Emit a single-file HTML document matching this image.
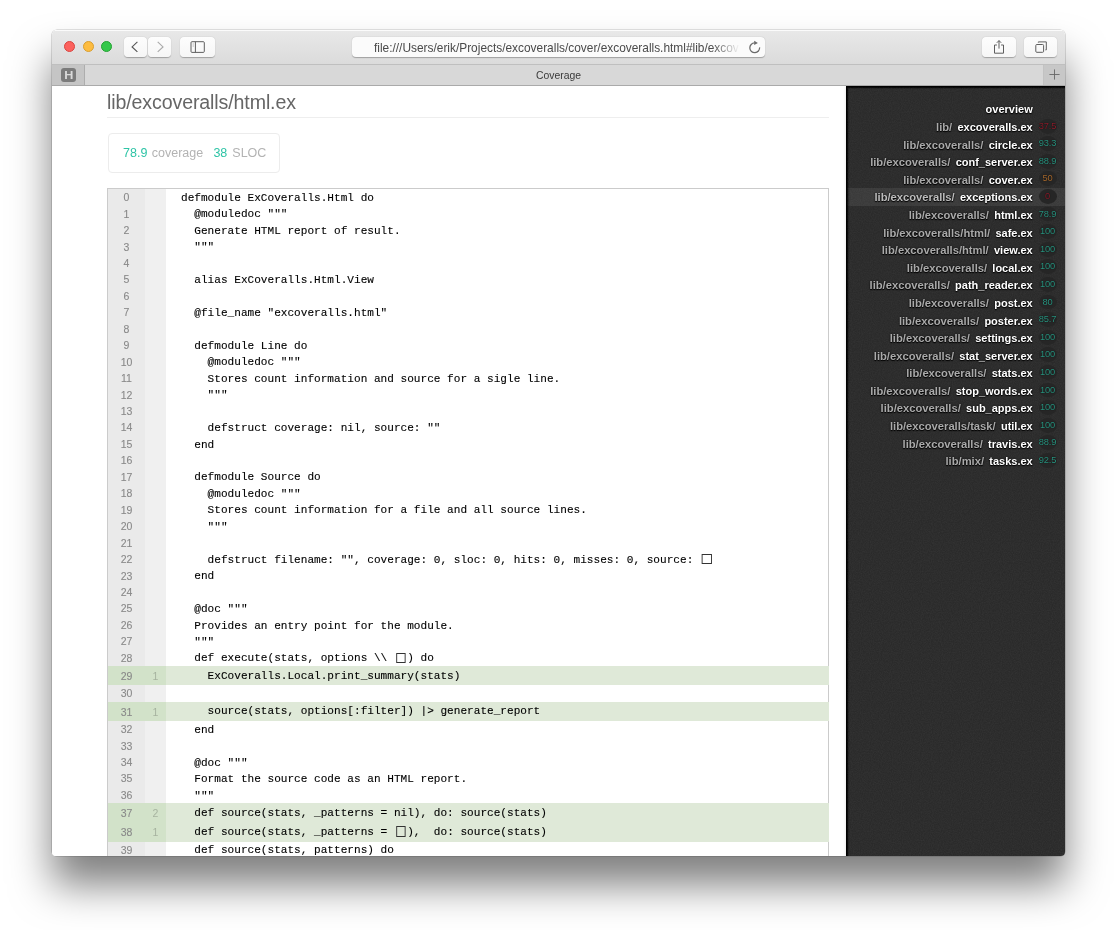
<!DOCTYPE html>
<html><head><meta charset="utf-8">
<style>
*{box-sizing:border-box;margin:0;padding:0}
html,body{width:1117px;height:930px;overflow:hidden;background:#fff}
body{position:relative;font-family:"Liberation Sans",sans-serif}
#shadow{position:absolute;left:52px;top:30px;width:1013px;height:826px;border-radius:5px;box-shadow:0 0 0 0.6px rgba(0,0,0,0.22),0 29px 40px rgba(0,0,0,0.5)}
#win{position:absolute;left:52px;top:30px;width:1013px;height:826px;border-radius:5px 5px 4px 4px;overflow:hidden;background:#fff;will-change:transform}
#toolbar{position:absolute;left:0;top:0;width:1013px;height:34px;background:linear-gradient(#e8e8e8,#dbdbdb);border-top:1px solid #fbfbfb}
#tbline{position:absolute;left:0;top:34px;width:1013px;height:1px;background:#bfbfbf}
#tabbar{position:absolute;left:0;top:35px;width:1013px;height:20px;background:#d8d8d8}
#tabline{position:absolute;left:0;top:55px;width:1013px;height:1px;background:#aaaaaa;z-index:5}
#content{position:absolute;left:0;top:55px;width:1013px;height:771px;background:#fff;overflow:hidden}
.tl{position:absolute;top:10.6px;width:11px;height:11px;border-radius:50%}
.btn{position:absolute;top:7px;height:20px;background:linear-gradient(#fdfdfd,#f6f6f6);border-radius:4px;box-shadow:0 0.5px 1px rgba(0,0,0,0.28)}
#url{position:absolute;left:300px;top:7px;width:413px;height:20px;background:#fbfbfb;border-radius:4px;box-shadow:0 0.5px 1px rgba(0,0,0,0.28);overflow:hidden}
#url .t{position:absolute;left:22px;top:3.6px;font-size:11.9px;color:#4a4a4a;white-space:nowrap;line-height:14px}
#url .fade{position:absolute;left:360px;top:0;width:40px;height:20px;background:linear-gradient(90deg,rgba(251,251,251,0),#fbfbfb 70%)}
#pinned{position:absolute;left:0;top:35px;width:33px;height:20px;background:#c5c5c5;border-right:1px solid #adadad}
#fav{position:absolute;left:9.2px;top:2.8px;width:14.6px;height:14.2px;border-radius:3px;background:#7b7b7b;color:#dadada;font-weight:700;font-size:10.5px;line-height:14.2px;text-align:center}
#fav span{display:inline-block;transform:scaleX(1.2)}
#newtab{position:absolute;left:991px;top:35px;width:22px;height:21px;background:#c7c7c7;border-left:1px solid #c2c2c2}
#tabtitle{position:absolute;left:0;top:36px;width:1013px;height:20px;text-align:center;font-size:10.4px;line-height:20px;color:#3a3a3a}

#title{position:absolute;left:55px;top:5.3px;font-size:19.6px;letter-spacing:-0.12px;line-height:24px;color:#666;white-space:nowrap}
#hr{position:absolute;left:55px;top:32px;width:722px;height:1px;background:#eeeeee}
#stats{position:absolute;left:56px;top:48px;width:172px;height:40px;border:1px solid #ececec;border-radius:4px}
#stats .t{position:absolute;left:14px;top:12.2px;font-size:12.5px;line-height:14px;white-space:pre;color:#b3b3b3}
#stats .high{color:#2ec4a6}
#table{position:absolute;left:55px;top:102.8px;width:722px;height:800px;border:1px solid #cbcbcb;background:linear-gradient(90deg,#eaeaea 0,#eaeaea 37px,#f0f0f0 37px,#f0f0f0 58px,#fff 58px)}
.row{position:absolute;left:56px;width:721px}
.row .ln{position:absolute;left:0;top:0;width:37px;height:100%;text-align:center;font-size:10.5px;color:#888;-webkit-text-stroke:0.1px #888}
.row .hc{position:absolute;left:37px;top:0;width:21px;height:100%;text-align:center;font-size:10.5px;color:rgba(0,0,0,0.22)}
.row .src{position:absolute;left:58px;top:0;right:0;height:100%}
.row .c{position:absolute;left:15px;top:1.05px;white-space:pre;font-family:"Liberation Mono",monospace;font-size:11.8px;color:#000;-webkit-text-stroke:0.12px #000;transform:scaleX(0.9398);transform-origin:0 0}
.row.hit .c{top:0.95px}
.row.hit .ln,.row.hit .hc{background:#d2e2c9;height:calc(100% + 0.4px)}
.row.hit .src{background:#dfe9d8;height:calc(100% + 0.4px)}
.bx{display:inline-block;width:14.16px;height:10px;position:relative;vertical-align:baseline}
.bx:after{content:"";position:absolute;left:2px;top:1.1px;width:10.5px;height:10.6px;border:1.1px solid #333;box-sizing:border-box}
.ln span,.hc span{position:relative;top:0.4px}
.hit .ln span,.hit .hc span{top:1.1px}

#menu{position:absolute;left:794px;top:1px;width:219px;height:771px;background:#2a2a2a;border-left:1px solid #000;border-top:1px solid #000;box-shadow:inset 1px 1px 1.5px #000,-1px 0 2px rgba(0,0,0,0.07)}
.mi{position:absolute;left:0;width:219px;height:17.59px;line-height:19.39px;text-align:right;padding-right:33.3px;font-size:11px;font-weight:700;color:#fff;white-space:nowrap;text-shadow:0 1px 1px #000,0 0 2px rgba(0,0,0,0.8)}
.mi .dn{color:#aaaaaa;padding-right:2.2px;font-size:11.2px}
.mi.sel{background:linear-gradient(90deg,rgba(255,255,255,0) 0,rgba(255,255,255,0.075) 3px)}
.mi.sel .dn{color:#bdbdbd}
.mi .cov{position:absolute;left:191.5px;top:0.7px;width:18px;height:14.8px;border-radius:50%;background:#262626;text-align:center;font-size:9.3px;letter-spacing:-0.15px;line-height:15.2px;font-weight:400;text-shadow:0 0 1px #000}
.mi .cov.high{color:#2b9480}
.mi .cov.medium{color:#a5692f}
.mi .cov.low{color:#8a1f2d}
</style></head>
<body>
<div id="shadow"></div>
<div id="win">
  <div id="toolbar"></div>
  <div class="tl" style="left:12px;background:#fc615d;border:1px solid #d9443f"></div>
  <div class="tl" style="left:30.5px;background:#fdbc40;border:1px solid #d99e2f"></div>
  <div class="tl" style="left:48.9px;background:#34c84a;border:1px solid #24a232"></div>
  <div class="btn" style="left:72px;width:23px">
    <svg width="23" height="20" style="position:absolute;left:0;top:0"><path d="M13.4 4.9 L8.1 9.9 L13.4 14.9" fill="none" stroke="#555" stroke-width="1.15"/></svg>
  </div>
  <div class="btn" style="left:96px;width:23px">
    <svg width="23" height="20" style="position:absolute;left:0;top:0"><path d="M9.7 4.9 L15 9.9 L9.7 14.9" fill="none" stroke="#aaa" stroke-width="1.15"/></svg>
  </div>
  <div class="btn" style="left:128px;width:35px">
    <svg width="35" height="20" style="position:absolute;left:0;top:0"><rect x="11" y="4.7" width="13.3" height="10.7" rx="1" fill="none" stroke="#5e5e5e" stroke-width="1"/><line x1="15.4" y1="4.7" x2="15.4" y2="15.4" stroke="#5e5e5e" stroke-width="1"/><line x1="13.2" y1="6.5" x2="13.2" y2="10" stroke="#8a8a8a" stroke-width="0.8" stroke-dasharray="1 1"/></svg>
  </div>
  <div id="url"><div class="t">file:///Users/erik/Projects/excoveralls/cover/excoveralls.html#lib/excov</div><div class="fade"></div>
    <svg width="20" height="20" style="position:absolute;left:393px;top:0"><path d="M9.6 5.9 A4.9 4.9 0 1 0 14.6 10.4" fill="none" stroke="#6a6a6a" stroke-width="1.25"/><path d="M9.2 3.8 L9.2 8.1 L12.9 6.1 Z" fill="#6a6a6a"/></svg>
  </div>
  <div class="btn" style="left:930px;width:34px">
    <svg width="34" height="20" style="position:absolute;left:0;top:0"><path d="M14.9 8 H12.5 V16.2 H21.5 V8 H19.1" fill="none" stroke="#5e5e5e" stroke-width="1"/><line x1="17" y1="3.6" x2="17" y2="11.6" stroke="#5e5e5e" stroke-width="1"/><path d="M14.8 5.8 L17 3.6 L19.2 5.8" fill="none" stroke="#5e5e5e" stroke-width="1"/></svg>
  </div>
  <div class="btn" style="left:972px;width:33px">
    <svg width="33" height="20" style="position:absolute;left:0;top:0"><rect x="11.8" y="7.5" width="7.8" height="7.8" rx="1" fill="none" stroke="#5e5e5e" stroke-width="1"/><path d="M14.3 5.6 V4.9 H22.3 V12.9 H21.4" fill="none" stroke="#5e5e5e" stroke-width="1"/></svg>
  </div>
  <div id="tbline"></div>
  <div id="tabbar"></div>
  <div id="pinned"><div id="fav"><span>H</span></div></div>
  <div id="tabtitle">Coverage</div>
  <div id="newtab"><svg width="22" height="20" style="position:absolute;left:0;top:0"><line x1="5.4" y1="9.5" x2="15.6" y2="9.5" stroke="#666" stroke-width="0.9"/><line x1="10.5" y1="4.4" x2="10.5" y2="14.6" stroke="#666" stroke-width="0.9"/></svg></div>
  <div id="tabline"></div>
  <div id="content">
    <div id="title">lib/excoveralls/html.ex</div>
    <div id="hr"></div>
    <div id="stats"><span class="t high" style="left:14px">78.9</span><span class="t" style="left:42.8px">coverage</span><span class="t high" style="left:104.4px">38</span><span class="t" style="left:123.3px">SLOC</span></div>
    <div id="table"></div>
<div class="row" style="top:103.80px;height:16.45px;line-height:16.45px"><div class="ln"><span>0</span></div><div class="hc"><span></span></div><div class="src"><div class="c">defmodule ExCoveralls.Html do</div></div></div>
<div class="row" style="top:120.25px;height:16.45px;line-height:16.45px"><div class="ln"><span>1</span></div><div class="hc"><span></span></div><div class="src"><div class="c">  @moduledoc &quot;&quot;&quot;</div></div></div>
<div class="row" style="top:136.70px;height:16.45px;line-height:16.45px"><div class="ln"><span>2</span></div><div class="hc"><span></span></div><div class="src"><div class="c">  Generate HTML report of result.</div></div></div>
<div class="row" style="top:153.15px;height:16.45px;line-height:16.45px"><div class="ln"><span>3</span></div><div class="hc"><span></span></div><div class="src"><div class="c">  &quot;&quot;&quot;</div></div></div>
<div class="row" style="top:169.60px;height:16.45px;line-height:16.45px"><div class="ln"><span>4</span></div><div class="hc"><span></span></div><div class="src"><div class="c"></div></div></div>
<div class="row" style="top:186.05px;height:16.45px;line-height:16.45px"><div class="ln"><span>5</span></div><div class="hc"><span></span></div><div class="src"><div class="c">  alias ExCoveralls.Html.View</div></div></div>
<div class="row" style="top:202.50px;height:16.45px;line-height:16.45px"><div class="ln"><span>6</span></div><div class="hc"><span></span></div><div class="src"><div class="c"></div></div></div>
<div class="row" style="top:218.95px;height:16.45px;line-height:16.45px"><div class="ln"><span>7</span></div><div class="hc"><span></span></div><div class="src"><div class="c">  @file_name &quot;excoveralls.html&quot;</div></div></div>
<div class="row" style="top:235.40px;height:16.45px;line-height:16.45px"><div class="ln"><span>8</span></div><div class="hc"><span></span></div><div class="src"><div class="c"></div></div></div>
<div class="row" style="top:251.85px;height:16.45px;line-height:16.45px"><div class="ln"><span>9</span></div><div class="hc"><span></span></div><div class="src"><div class="c">  defmodule Line do</div></div></div>
<div class="row" style="top:268.30px;height:16.45px;line-height:16.45px"><div class="ln"><span>10</span></div><div class="hc"><span></span></div><div class="src"><div class="c">    @moduledoc &quot;&quot;&quot;</div></div></div>
<div class="row" style="top:284.75px;height:16.45px;line-height:16.45px"><div class="ln"><span>11</span></div><div class="hc"><span></span></div><div class="src"><div class="c">    Stores count information and source for a sigle line.</div></div></div>
<div class="row" style="top:301.20px;height:16.45px;line-height:16.45px"><div class="ln"><span>12</span></div><div class="hc"><span></span></div><div class="src"><div class="c">    &quot;&quot;&quot;</div></div></div>
<div class="row" style="top:317.65px;height:16.45px;line-height:16.45px"><div class="ln"><span>13</span></div><div class="hc"><span></span></div><div class="src"><div class="c"></div></div></div>
<div class="row" style="top:334.10px;height:16.45px;line-height:16.45px"><div class="ln"><span>14</span></div><div class="hc"><span></span></div><div class="src"><div class="c">    defstruct coverage: nil, source: &quot;&quot;</div></div></div>
<div class="row" style="top:350.55px;height:16.45px;line-height:16.45px"><div class="ln"><span>15</span></div><div class="hc"><span></span></div><div class="src"><div class="c">  end</div></div></div>
<div class="row" style="top:367.00px;height:16.45px;line-height:16.45px"><div class="ln"><span>16</span></div><div class="hc"><span></span></div><div class="src"><div class="c"></div></div></div>
<div class="row" style="top:383.45px;height:16.45px;line-height:16.45px"><div class="ln"><span>17</span></div><div class="hc"><span></span></div><div class="src"><div class="c">  defmodule Source do</div></div></div>
<div class="row" style="top:399.90px;height:16.45px;line-height:16.45px"><div class="ln"><span>18</span></div><div class="hc"><span></span></div><div class="src"><div class="c">    @moduledoc &quot;&quot;&quot;</div></div></div>
<div class="row" style="top:416.35px;height:16.45px;line-height:16.45px"><div class="ln"><span>19</span></div><div class="hc"><span></span></div><div class="src"><div class="c">    Stores count information for a file and all source lines.</div></div></div>
<div class="row" style="top:432.80px;height:16.45px;line-height:16.45px"><div class="ln"><span>20</span></div><div class="hc"><span></span></div><div class="src"><div class="c">    &quot;&quot;&quot;</div></div></div>
<div class="row" style="top:449.25px;height:16.45px;line-height:16.45px"><div class="ln"><span>21</span></div><div class="hc"><span></span></div><div class="src"><div class="c"></div></div></div>
<div class="row" style="top:465.70px;height:16.45px;line-height:16.45px"><div class="ln"><span>22</span></div><div class="hc"><span></span></div><div class="src"><div class="c">    defstruct filename: &quot;&quot;, coverage: 0, sloc: 0, hits: 0, misses: 0, source: <span class="bx"></span></div></div></div>
<div class="row" style="top:482.15px;height:16.45px;line-height:16.45px"><div class="ln"><span>23</span></div><div class="hc"><span></span></div><div class="src"><div class="c">  end</div></div></div>
<div class="row" style="top:498.60px;height:16.45px;line-height:16.45px"><div class="ln"><span>24</span></div><div class="hc"><span></span></div><div class="src"><div class="c"></div></div></div>
<div class="row" style="top:515.05px;height:16.45px;line-height:16.45px"><div class="ln"><span>25</span></div><div class="hc"><span></span></div><div class="src"><div class="c">  @doc &quot;&quot;&quot;</div></div></div>
<div class="row" style="top:531.50px;height:16.45px;line-height:16.45px"><div class="ln"><span>26</span></div><div class="hc"><span></span></div><div class="src"><div class="c">  Provides an entry point for the module.</div></div></div>
<div class="row" style="top:547.95px;height:16.45px;line-height:16.45px"><div class="ln"><span>27</span></div><div class="hc"><span></span></div><div class="src"><div class="c">  &quot;&quot;&quot;</div></div></div>
<div class="row" style="top:564.40px;height:16.45px;line-height:16.45px"><div class="ln"><span>28</span></div><div class="hc"><span></span></div><div class="src"><div class="c">  def execute(stats, options \\ <span class="bx"></span>) do</div></div></div>
<div class="row hit" style="top:580.85px;height:19.2px;line-height:19.2px"><div class="ln"><span>29</span></div><div class="hc"><span>1</span></div><div class="src"><div class="c">    ExCoveralls.Local.print_summary(stats)</div></div></div>
<div class="row" style="top:600.05px;height:16.45px;line-height:16.45px"><div class="ln"><span>30</span></div><div class="hc"><span></span></div><div class="src"><div class="c"></div></div></div>
<div class="row hit" style="top:616.50px;height:19.2px;line-height:19.2px"><div class="ln"><span>31</span></div><div class="hc"><span>1</span></div><div class="src"><div class="c">    source(stats, options[:filter]) |&gt; generate_report</div></div></div>
<div class="row" style="top:635.70px;height:16.45px;line-height:16.45px"><div class="ln"><span>32</span></div><div class="hc"><span></span></div><div class="src"><div class="c">  end</div></div></div>
<div class="row" style="top:652.15px;height:16.45px;line-height:16.45px"><div class="ln"><span>33</span></div><div class="hc"><span></span></div><div class="src"><div class="c"></div></div></div>
<div class="row" style="top:668.60px;height:16.45px;line-height:16.45px"><div class="ln"><span>34</span></div><div class="hc"><span></span></div><div class="src"><div class="c">  @doc &quot;&quot;&quot;</div></div></div>
<div class="row" style="top:685.05px;height:16.45px;line-height:16.45px"><div class="ln"><span>35</span></div><div class="hc"><span></span></div><div class="src"><div class="c">  Format the source code as an HTML report.</div></div></div>
<div class="row" style="top:701.50px;height:16.45px;line-height:16.45px"><div class="ln"><span>36</span></div><div class="hc"><span></span></div><div class="src"><div class="c">  &quot;&quot;&quot;</div></div></div>
<div class="row hit" style="top:717.95px;height:19.2px;line-height:19.2px"><div class="ln"><span>37</span></div><div class="hc"><span>2</span></div><div class="src"><div class="c">  def source(stats, _patterns = nil), do: source(stats)</div></div></div>
<div class="row hit" style="top:737.15px;height:19.2px;line-height:19.2px"><div class="ln"><span>38</span></div><div class="hc"><span>1</span></div><div class="src"><div class="c">  def source(stats, _patterns = <span class="bx"></span>),  do: source(stats)</div></div></div>
<div class="row" style="top:756.35px;height:16.45px;line-height:16.45px"><div class="ln"><span>39</span></div><div class="hc"><span></span></div><div class="src"><div class="c">  def source(stats, patterns) do</div></div></div>
    <div id="menu">
<svg width="219" height="771" style="position:absolute;left:0;top:0"><filter id="nz" x="0" y="0" width="100%" height="100%"><feTurbulence type="fractalNoise" baseFrequency="0.9" numOctaves="2" seed="3"/><feColorMatrix type="matrix" values="0 0 0 0 0.5  0 0 0 0 0.5  0 0 0 0 0.5  0.6 0 0 0 -0.15"/></filter><rect width="219" height="771" filter="url(#nz)" opacity="0.17"/></svg>
<div class="mi" style="top:13.45px"> <span class="bn">overview</span></div>
<div class="mi" style="top:31.04px"><span class="dn">lib/</span> <span class="bn">excoveralls.ex</span><span class="cov low">37.5</span></div>
<div class="mi" style="top:48.63px"><span class="dn">lib/excoveralls/</span> <span class="bn">circle.ex</span><span class="cov high">93.3</span></div>
<div class="mi" style="top:66.22px"><span class="dn">lib/excoveralls/</span> <span class="bn">conf_server.ex</span><span class="cov high">88.9</span></div>
<div class="mi" style="top:83.81px"><span class="dn">lib/excoveralls/</span> <span class="bn">cover.ex</span><span class="cov medium">50</span></div>
<div class="mi sel" style="top:101.40px"><span class="dn">lib/excoveralls/</span> <span class="bn">exceptions.ex</span><span class="cov low">0</span></div>
<div class="mi" style="top:118.99px"><span class="dn">lib/excoveralls/</span> <span class="bn">html.ex</span><span class="cov high">78.9</span></div>
<div class="mi" style="top:136.58px"><span class="dn">lib/excoveralls/html/</span> <span class="bn">safe.ex</span><span class="cov high">100</span></div>
<div class="mi" style="top:154.17px"><span class="dn">lib/excoveralls/html/</span> <span class="bn">view.ex</span><span class="cov high">100</span></div>
<div class="mi" style="top:171.76px"><span class="dn">lib/excoveralls/</span> <span class="bn">local.ex</span><span class="cov high">100</span></div>
<div class="mi" style="top:189.35px"><span class="dn">lib/excoveralls/</span> <span class="bn">path_reader.ex</span><span class="cov high">100</span></div>
<div class="mi" style="top:206.94px"><span class="dn">lib/excoveralls/</span> <span class="bn">post.ex</span><span class="cov high">80</span></div>
<div class="mi" style="top:224.53px"><span class="dn">lib/excoveralls/</span> <span class="bn">poster.ex</span><span class="cov high">85.7</span></div>
<div class="mi" style="top:242.12px"><span class="dn">lib/excoveralls/</span> <span class="bn">settings.ex</span><span class="cov high">100</span></div>
<div class="mi" style="top:259.71px"><span class="dn">lib/excoveralls/</span> <span class="bn">stat_server.ex</span><span class="cov high">100</span></div>
<div class="mi" style="top:277.30px"><span class="dn">lib/excoveralls/</span> <span class="bn">stats.ex</span><span class="cov high">100</span></div>
<div class="mi" style="top:294.89px"><span class="dn">lib/excoveralls/</span> <span class="bn">stop_words.ex</span><span class="cov high">100</span></div>
<div class="mi" style="top:312.48px"><span class="dn">lib/excoveralls/</span> <span class="bn">sub_apps.ex</span><span class="cov high">100</span></div>
<div class="mi" style="top:330.07px"><span class="dn">lib/excoveralls/task/</span> <span class="bn">util.ex</span><span class="cov high">100</span></div>
<div class="mi" style="top:347.66px"><span class="dn">lib/excoveralls/</span> <span class="bn">travis.ex</span><span class="cov high">88.9</span></div>
<div class="mi" style="top:365.25px"><span class="dn">lib/mix/</span> <span class="bn">tasks.ex</span><span class="cov high">92.5</span></div>
    </div>
  </div>
</div>
</body></html>
